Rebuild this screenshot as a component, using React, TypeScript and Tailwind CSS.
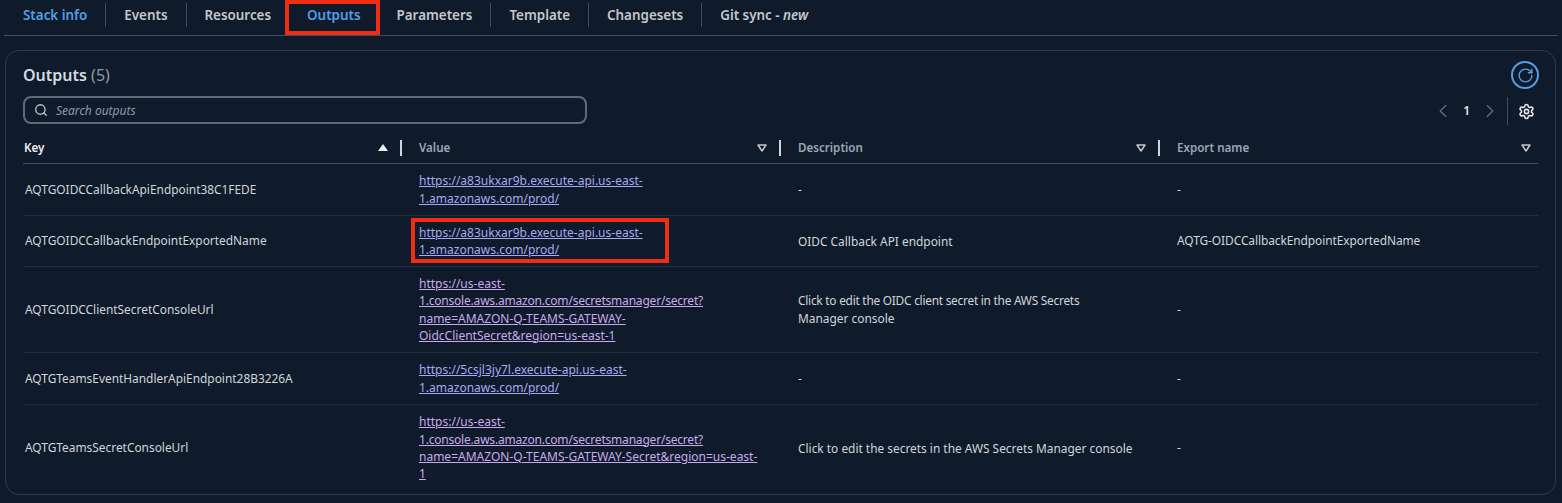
import { RotateCw, Search, ChevronLeft, ChevronRight, Settings } from "lucide-react";

const tabs = ["Stack info", "Events", "Resources", "Outputs", "Parameters", "Template", "Changesets"];

const Filter = () => (
  <svg width="10" height="8" viewBox="0 0 10 8" className="shrink-0">
    <path d="M1 1h8L5 7z" fill="none" stroke="#c6c6cd" strokeWidth="1.5" strokeLinejoin="round" />
  </svg>
);

const HeaderCell: React.FC<{ label: string; width: string; divider?: boolean }> = ({ label, width, divider = true }) => (
  <div className={`${width} flex items-center h-full pl-[17px] pr-[13px] shrink-0`}>
    <span className="text-[11.6px] font-semibold text-[#9ba7b6]">{label}</span>
    <span className={divider ? "ml-auto" : "ml-auto mr-[-6px]"}><Filter /></span>
    {divider && <span className="ml-[12px] mr-[-13px] w-[2px] h-[16px] bg-[#d1d5db]" />}
  </div>
);

const rows = [
  {
    key: "AQTGOIDCCallbackApiEndpoint38C1FEDE",
    value: ["https://a83ukxar9b.execute-api.us-east-", "1.amazonaws.com/prod/"],
    desc: ["-"],
    exp: "-",
    h: "h-[52px]",
    link: "text-[#a9a8f2]",
  },
  {
    key: "AQTGOIDCCallbackEndpointExportedName",
    value: ["https://a83ukxar9b.execute-api.us-east-", "1.amazonaws.com/prod/"],
    desc: ["OIDC Callback API endpoint"],
    exp: "AQTG-OIDCCallbackEndpointExportedName",
    h: "h-[51px]",
    link: "text-[#a9a8f2]",
  },
  {
    key: "AQTGOIDCClientSecretConsoleUrl",
    value: [
      "https://us-east-",
      "1.console.aws.amazon.com/secretsmanager/secret?",
      "name=AMAZON-Q-TEAMS-GATEWAY-",
      "OidcClientSecret&region=us-east-1",
    ],
    desc: ["Click to edit the OIDC client secret in the AWS Secrets", "Manager console"],
    exp: "-",
    h: "h-[86px]",
    link: "text-[#c9aaec]",
  },
  {
    key: "AQTGTeamsEventHandlerApiEndpoint28B3226A",
    value: ["https://5csjl3jy7l.execute-api.us-east-", "1.amazonaws.com/prod/"],
    desc: ["-"],
    exp: "-",
    h: "h-[52px]",
    link: "text-[#a9a8f2]",
  },
  {
    key: "AQTGTeamsSecretConsoleUrl",
    value: [
      "https://us-east-",
      "1.console.aws.amazon.com/secretsmanager/secret?",
      "name=AMAZON-Q-TEAMS-GATEWAY-Secret&region=us-east-",
      "1",
    ],
    desc: ["Click to edit the secrets in the AWS Secrets Manager console"],
    exp: "-",
    h: "h-[86px]",
    link: "text-[#c9aaec]",
  },
];

export default function App() {
  return (
    <div className="relative w-[1562px] h-[503px] overflow-hidden bg-[#0f1b2a] text-[#d1d5db] font-['Noto_Sans',sans-serif]">
      {/* tabs */}
      <div className="flex items-center h-[36px] ml-[4px] mr-[4px] pb-[6px] pl-[1px] border-b border-[#414d5c]">
        {tabs.map((t, i) => (
          <div key={t} className="flex items-center">
            <span
              className={`px-[18px] text-[13.4px] font-semibold leading-[30px] ${
                i === 0 || i === 3 ? "text-[#539fe5]" : "text-[#c6c6cd]"
              }`}
            >
              {t}
            </span>
            {i !== 2 && i !== 3 && <span className="w-px h-[24px] bg-[#414d5c]" />}
          </div>
        ))}
        <span className="px-[18px] text-[13.4px] font-semibold leading-[30px] text-[#c6c6cd]">
          Git sync - <em>new</em>
        </span>
      </div>

      {/* card */}
      <div className="mt-[14px] ml-[5px] w-[1551px] h-[445px] border border-[#2f3b4b] rounded-[14px] pl-[17px] pr-[17px]">
        <div className="flex items-start justify-between pt-[9px] h-[46px]">
          <h2 className="text-[16px] font-semibold text-[#d5dae1] leading-[30px]">
            Outputs <span className="font-normal text-[#8d99a8]">(5)</span>
          </h2>
          <div className="w-[28px] h-[28px] mt-[1px] ml-auto translate-x-[1px] rounded-full border-2 border-[#539fe5] flex items-center justify-center">
            <RotateCw size={17} className="text-[#539fe5]" />
          </div>
        </div>

        <div className="flex items-center h-[28px]">
          <div className="w-[564px] h-[28px] mt-[-2px] border-2 border-[#5f6b7a] rounded-[8px] flex items-center pl-[9px]">
            <Search size={14} strokeWidth={2.2} className="text-[#c6c6cd]" />
            <span className="ml-[8px] pt-[1px] text-[12px] italic text-[#8d99a8]">Search outputs</span>
          </div>
          <div className="ml-auto flex items-center mr-[3px]">
            <ChevronLeft size={22} strokeWidth={1.5} className="text-[#5f6b7a]" />
            <span className="mx-[9px] text-[12px] font-semibold text-[#e5e7eb]">1</span>
            <ChevronRight size={22} strokeWidth={1.5} className="text-[#5f6b7a]" />
            <span className="ml-[6px] w-px h-[28px] bg-[#414d5c]" />
            <Settings size={17} strokeWidth={2.2} className="ml-[10px] text-[#e5e7eb]" />
          </div>
        </div>

        {/* table */}
        <div className="w-[1515px] mt-[7px]">
          <div className="flex items-center h-[32px] border-b border-[#414d5c]">
            <div className="w-[379px] flex items-center h-full pl-[1px] pr-0 shrink-0">
              <span className="text-[11.6px] font-semibold text-[#eceef1]">Key</span>
              <svg width="10" height="7" viewBox="0 0 10 7" className="ml-auto mr-[12px]">
                <path d="M5 0l5 7H0z" fill="#eceef1" />
              </svg>
              <span className="w-[2px] h-[16px] bg-[#d1d5db]" />
            </div>
            <HeaderCell label="Value" width="w-[379px]" />
            <HeaderCell label="Description" width="w-[379px]" />
            <HeaderCell label="Export name" width="w-[378px]" divider={false} />
          </div>
          {rows.map((r, i) => (
            <div
              key={r.key}
              className={`flex items-center ${r.h} text-[11.9px] ${i < rows.length - 1 ? "border-b border-[#232f3e]" : ""}`}
            >
              <div className="w-[396px] pl-[2px] shrink-0">{r.key}</div>
              <div className="w-[379px] shrink-0 text-[12px] leading-[17.3px]">
                {r.value.map((line) => (
                  <div key={line} className={line.startsWith("1.console") ? "tracking-[-0.2px]" : ""}>
                    <a href="#" className={`${r.link} underline`}>{line}</a>
                  </div>
                ))}
              </div>
              <div className="w-[379px] shrink-0 leading-[18px] -mt-px">
                {r.desc.map((line) => (
                  <div key={line} className={line.includes("OIDC client") ? "tracking-[-0.25px]" : ""}>{line}</div>
                ))}
              </div>
              <div className="tracking-[-0.06px]">{r.exp}</div>
            </div>
          ))}
        </div>
      </div>

      {/* annotation boxes */}
      <div className="absolute left-[290px] top-[33px] w-[86px] h-[2px] bg-[#8d99a8]" />
      <div className="absolute left-[285px] top-0 w-[95px] h-[35px] border-4 border-[#f02d12]" />
      <div className="absolute left-[411px] top-[218px] w-[258px] h-[45px] border-4 border-[#f02d12]" />
    </div>
  );
}
